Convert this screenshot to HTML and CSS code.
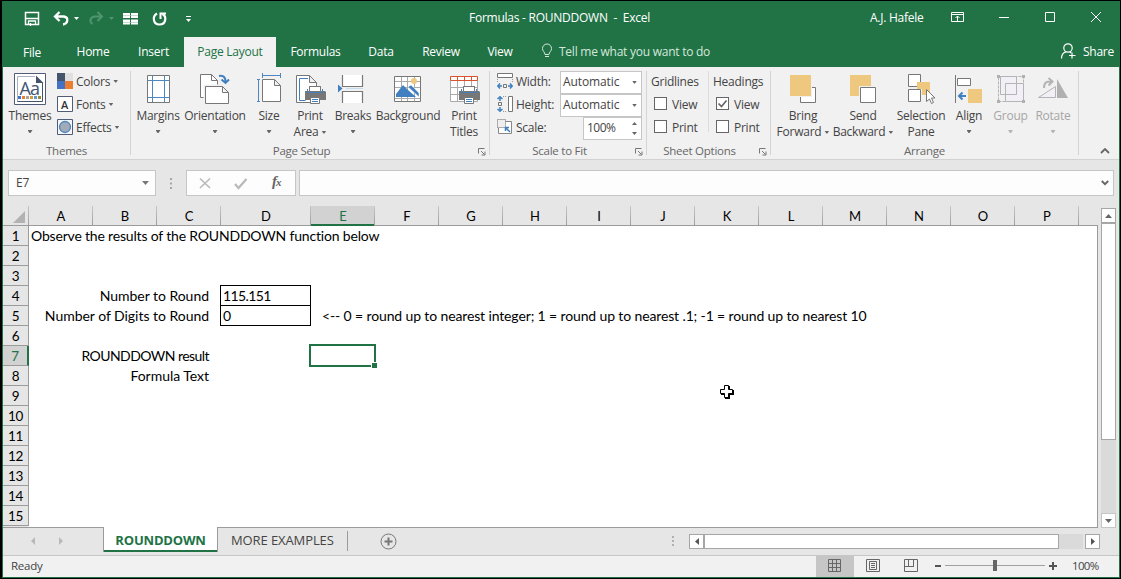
FILE: index.html
```
<!DOCTYPE html>
<html lang="en">
<head>
<meta charset="utf-8">
<title>Formulas - ROUNDDOWN - Excel</title>
<link rel="stylesheet" href="styles.css">
</head>
<body>
<div class="window"><div class="app">

<header class="titlebar">
  <svg class="qat" width="172" height="20" viewBox="23 9 172 20" fill="none" stroke="#fff">
    <path d="M25.5 12.500h13v12h-13z" stroke-width="1.500"/><path d="M26 18.500h12" stroke-width="1.500"/><path d="M28.500 25v-4h7v4M30.500 23v3" stroke-width="1.300"/>
    <path d="M59.500 12l-4.500 4.500 4.500 4.500M55.500 16.500h8.500c5 1 4 7.500-1 8" stroke-width="2.300"/>
    <path d="M74 17h5l-2.500 3z" fill="#fff" stroke="none"/>
    <g stroke="#4f9570"><path d="M97.500 12l4.500 4.500-4.500 4.500M101.500 16.500h-7c-5 1-5 5.500-2 7.500" stroke-width="2"/><path d="M109 17h5l-2.500 3z" fill="#4f9570" stroke="none"/></g>
    <path d="M123 13h7v5h-7zM131 13h7v5h-7zM123 19.500h7v5h-7zM131 19.500h7v5h-7z" fill="#fff" stroke="none"/><path d="M123 15.500h15M123 22.500h15" stroke="#9cc3ad" stroke-width=".6"/>
    <path d="M157 13.500c-5 3-4 11 2.500 11s7.500-8 3-10.500" stroke-width="2.200"/><path d="M160.500 19v-5.500h5.500" stroke-width="2"/>
    <path d="M186 16.500h5" /><path d="M186 19h5l-2.500 3z" fill="#fff" stroke="none"/>
  </svg>
  <div class="doc-title">Formulas - ROUNDDOWN&nbsp; -&nbsp; Excel</div>
  <div class="user">A.J. Hafele</div>
  <svg class="winctl" width="152" height="14" viewBox="950 10 152 14" fill="none" stroke="#fff">
    <path d="M951.500 12.500h12v9h-12zM951.500 14.500h12M957.500 21v-5M955.500 18l2-2 2 2M999 17.500h10M1045.500 12.500h9v9h-9zM1091 12l10 10M1101 12l-10 10"/>
  </svg>
</header>

<nav class="tabs">
  <div class="tab t-file">File</div><div class="tab t-home">Home</div><div class="tab t-insert">Insert</div><div class="tab t-layout active">Page Layout</div><div class="tab t-formulas">Formulas</div><div class="tab t-data">Data</div><div class="tab t-review">Review</div><div class="tab t-view">View</div>
  <div class="tell"><svg width="12" height="16" viewBox="541 43 12 16" fill="none" stroke="#d5e7dc"><path d="M545 54.500c0-2.500-2.500-3-2.500-6a4.500 4.500 0 0 1 9 0c0 3-2.500 3.500-2.500 6zM545 56.500h4"/></svg><span>Tell me what you want to do</span></div>
  <div class="share"><svg width="16" height="17" viewBox="1060 43 16 17" fill="none" stroke="#fff" stroke-width="1.200"><circle cx="1068" cy="48" r="4.200"/><path d="M1061.500 58.500c0-4 2-6 4.500-6.500M1070 52l1 1M1072 52.500v6M1069 55.500h6.500"/></svg><span>Share</span></div>
</nav>

<section class="ribbon">
  <div class="group g-themes">
    <div class="group-body">
      <div class="big b-themes"><svg width="34" height="34" viewBox="13 72 34 34" fill="none"><path d="M14.500 73.500h31v31h-31z" fill="#fff" stroke="#505c78"/><path d="M17.500 102V76.500H35" stroke="#a8b0c2"/><path d="M36 76h1l6 6v1h-7z" fill="#fff"/><path d="M36 75.500v7.500h7.500z" fill="#44546a"/><path d="M42.500 83v18.500h-25" stroke="#44546a"/><text class="aa" x="19.500" y="94.500" fill="#3f5675">Aa</text><path d="M18 96h3v3h-3z" fill="#4472c4"/><path d="M22 96h3v3h-3z" fill="#ed7d31"/><path d="M26 96h3v3h-3z" fill="#a5a5a5"/><path d="M30 96h3v3h-3z" fill="#d79b38"/><path d="M34 96h3v3h-3z" fill="#5b9bd5"/><path d="M38 96h3v3h-3z" fill="#9b8b3e"/></svg><span>Themes</span><i class="arr low"></i></div>
      <div class="small-col">
        <div class="small"><svg width="16" height="16"><path d="M0 0h8v8H0z" fill="#44546a"/><path d="M8 0h8v8H8z" fill="#e0e0e0"/><path d="M0 8h8v8H0z" fill="#4472c4"/><path d="M8 8h8v8H8z" fill="#ed7d31"/></svg><span>Colors</span><i class="arr"></i></div>
        <div class="small"><svg width="16" height="16"><path d="M.5.5h15v15H.5z" fill="#fff" stroke="#505c78"/><text class="a" x="4" y="12.500" fill="#333">A</text></svg><span>Fonts</span><i class="arr"></i></div>
        <div class="small"><svg width="16" height="16"><path d="M.5.5h15v15H.5z" fill="#f4f6fa" stroke="#505c78"/><circle cx="8" cy="8" r="5.500" fill="#a2aab8" stroke="#4e86bf" stroke-width="1.300"/></svg><span>Effects</span><i class="arr"></i></div>
      </div>
    </div>
    <div class="group-name">Themes</div>
  </div>

  <div class="group g-page">
    <div class="group-body">
      <div class="big b-margins"><svg width="34" height="34" viewBox="141 72 34 34" fill="none"><path d="M147.500 75.500h22v27h-22z" fill="#fff" stroke="#777"/><path d="M152.500 76v26M164.500 76v26M148 80.500h21M148 97.500h21" stroke="#4e86bf"/></svg><span>Margins</span><i class="arr low"></i></div>
      <div class="big b-orient"><svg width="34" height="34" viewBox="198 72 34 34" fill="#fff" stroke="#777"><path d="M200.500 74.500h11l6 6v17h-17z"/><path d="M211.500 74.500v6h6" fill="none"/><path d="M205.500 86.500h17l6 6v11h-23z" stroke="#f1f1f1" stroke-width="4"/><path d="M205.500 86.500h17l6 6v11h-23zM222.500 86.500v6h6"/><path d="M219 76c5-1 7 2 6.500 7M221.500 79.500l4 3.500 3.500-3.500" fill="none" stroke="#4080c0" stroke-width="2"/></svg><span>Orientation</span><i class="arr low"></i></div>
      <div class="big b-size"><svg width="34" height="34" viewBox="252 72 34 34" fill="none" stroke="#4e86bf"><path d="M262.500 75.500h18M262.500 73v5M280.500 73v5M258.500 79.500v22M257 79.500h3M257 101.500h3"/><path d="M262.500 79.500h12l6 6v16h-18zM274.500 79.500v6h6" fill="#fff" stroke="#777"/></svg><span>Size</span><i class="arr low"></i></div>
      <div class="big b-area"><svg width="34" height="34" viewBox="294 72 34 34" fill="#fff" stroke="#777"><path d="M297.500 75.500h13l7 7v20h-20zM310.500 75.500v7h7"/><path d="M309 78.500h-8.500v22h6" stroke="#4080c0" fill="none"/><path d="M306 91h4v-5h12v5h4l1 1v8h-21z" fill="#777" stroke="none"/><path d="M310.500 86.500h11v5h-11z"/><path d="M308.500 89v3.500h15V89" stroke="#4080c0" fill="none"/><path d="M311.500 97.500h9v6h-9z"/><path d="M313 99.500h6M313 101.500h6" stroke="#4080c0"/></svg><span>Print</span><span>Area<i class="arr"></i></span></div>
      <div class="big b-breaks"><svg width="34" height="34" viewBox="336 72 34 34" fill="none"><path d="M342.500 75v11.500h20V75M342.500 103V91.500h20V103" fill="#fff" stroke="#777" stroke-width="1.200"/><path d="M346 88.500h17" stroke="#c5dced"/><path d="M338 84.500v8l4.500-4z" fill="#4080c0"/></svg><span>Breaks</span><i class="arr low"></i></div>
      <div class="big b-back"><svg width="34" height="34" viewBox="391 72 34 34" fill="none"><path d="M394.500 76.500h26v25h-26z" fill="#fff" stroke="#777"/><path d="M401.500 77v24M407.500 77v24M414.500 77v24M395 81.500h25M395 87.500h25M395 98.500h25" stroke="#aaa"/><path d="M396 97v-3l7-9 5 5 8 7z" fill="#4080c0"/><path d="M408 87l11 10v-4l-8-8z" fill="#4080c0" stroke="#fff" stroke-width=".5"/><circle cx="414" cy="81" r="3" fill="#edc87e"/></svg><span>Background</span></div>
      <div class="big b-titles"><svg width="34" height="34" viewBox="447 72 34 34" fill="none"><path d="M450.500 80.500v21h27v-21z" fill="#fff" stroke="#aaa"/><path d="M457.500 80v21M464.500 80v21M471.500 80v21M451 87.500h26M451 94.500h26" stroke="#aaa"/><path d="M450.500 76.500h27v4h-27zM457.500 76.500v4M464.500 76.500v4M471.500 76.500v4" stroke="#d9532c" fill="#fff"/><g transform="translate(153)" fill="#fff" stroke="#777"><path d="M306 91h4v-5h12v5h4l1 1v8h-21z" fill="#777" stroke="none"/><path d="M310.500 86.500h11v5h-11z"/><path d="M308.500 89v3.500h15V89" stroke="#4080c0" fill="none"/><path d="M311.500 97.500h9v6h-9z"/><path d="M313 99.500h6M313 101.500h6" stroke="#4080c0"/></g></svg><span>Print</span><span>Titles</span></div>
    </div>
    <div class="group-name">Page Setup<svg class="launch" width="8" height="8"><path d="M.5 5.500v-5h6M3 3l3.500 3.500M7 3.500V7H3.500" fill="none" stroke="#777"/></svg></div>
  </div>

  <div class="group g-scale">
    <div class="group-body">
      <div class="scale-col">
        <div class="srow"><svg width="16" height="16" fill="none"><path d="M.5.500h15v4H.5z" fill="#fff" stroke="#777"/><path d="M.5 6v4M15.500 6v4" stroke="#999" stroke-dasharray="1 1"/><path d="M6.500 11.500h3v3h-3z" stroke="#777"/><path d="M1 13h4M11 13h4M3 10.500L.8 13 3 15.500M13 10.500l2.200 2.500-2.200 2.500" stroke="#4080c0" stroke-width="1.500"/></svg><span>Width:</span></div>
        <div class="srow"><svg width="16" height="16" fill="none"><path d="M11.500.500h4v15h-4z" fill="#fff" stroke="#777"/><path d="M6 .5h4M6 15.500h4" stroke="#999" stroke-dasharray="1 1"/><path d="M1.500 6.500h3v3h-3z" stroke="#777"/><path d="M3 1v4M3 11v4M.5 3L3 .8 5.500 3M.5 13L3 15.200 5.500 13" stroke="#4080c0" stroke-width="1.500"/></svg><span>Height:</span></div>
        <div class="srow"><svg width="16" height="16" fill="none"><path d="M8 2.500h6.500v12h-13V9" fill="#fff" stroke="#888"/><path d="M.5.500h8v8h-8z" stroke="#666" stroke-dasharray="1 1" fill="#eee"/><path d="M13 13L8.500 8.500M8.500 12V8.500H12" stroke="#4080c0" stroke-width="1.500"/></svg><span>Scale:</span></div>
      </div>
      <div class="combo-col"><div class="combo">Automatic<i class="arr"></i></div><div class="combo">Automatic<i class="arr"></i></div><div class="combo spin">100%<svg width="5" height="13" fill="#666"><path d="M0 3h5L2.500 0zM0 10h5L2.500 13z"/></svg></div></div>
    </div>
    <div class="group-name">Scale to Fit<svg class="launch" width="8" height="8"><path d="M.5 5.500v-5h6M3 3l3.500 3.500M7 3.500V7H3.500" fill="none" stroke="#777"/></svg></div>
  </div>

  <div class="group g-sheet">
    <div class="group-body">
      <div class="opt-col first"><div class="opt-head">Gridlines</div><div class="opt"><b class="box"></b><span>View</span></div><div class="opt"><b class="box"></b><span>Print</span></div></div>
      <div class="opt-col"><div class="opt-head">Headings</div><div class="opt"><b class="box"><svg width="11" height="11"><path d="M1.500 5.500L4.500 8.500 9.500 2.500" fill="none" stroke="#666" stroke-width="1.700"/></svg></b><span>View</span></div><div class="opt"><b class="box"></b><span>Print</span></div></div>
    </div>
    <div class="group-name">Sheet Options<svg class="launch" width="8" height="8"><path d="M.5 5.500v-5h6M3 3l3.500 3.500M7 3.500V7H3.500" fill="none" stroke="#777"/></svg></div>
  </div>

  <div class="group g-arrange">
    <div class="group-body">
      <div class="big b-bring"><svg width="34" height="34" viewBox="786 72 34 34"><path d="M800.500 87.500h15v15h-15z" fill="#fff" stroke="#777"/><path d="M789 74h23v23h-23z" fill="#f1f1f1"/><path d="M790 75h21v21h-21z" fill="#edc87e"/></svg><span>Bring</span><span>Forward<i class="arr"></i></span></div>
      <div class="big b-send"><svg width="34" height="34" viewBox="846 72 34 34"><path d="M850 75h21v21h-21z" fill="#edc87e"/><path d="M859 86h18v18h-18z" fill="#f1f1f1"/><path d="M860.500 87.500h15v15h-15z" fill="#fff" stroke="#777"/></svg><span>Send</span><span>Backward<i class="arr"></i></span></div>
      <div class="big b-sel"><svg width="34" height="34" viewBox="904 72 34 34" fill="#fff" stroke="#777"><path d="M908.500 74.500h12v12h-12zM908.500 89.500h12v12h-12z"/><path d="M917 82h13v13h-8v-6h-5z" fill="#edc87e" stroke="none"/><path d="M926.500 89.500v12l3-2.500 2 4.500 2-1-2-4.500h3.500z"/></svg><span>Selection</span><span>Pane</span></div>
      <div class="big b-align"><svg width="34" height="34" viewBox="952 72 34 34" fill="none"><path d="M955.500 75v28" stroke="#777"/><path d="M957.500 78.500h13v7h-13z" fill="#fff" stroke="#777"/><path d="M968 89h14v14h-14z" fill="#edc87e"/><path d="M966 96h-7M962.500 92.500L959 96l3.500 3.500" stroke="#4080c0" stroke-width="2"/></svg><span>Align</span><i class="arr low"></i></div>
      <div class="big b-group off"><svg width="34" height="34" viewBox="994 72 34 34" fill="#f3eff6" stroke="#b4b4b4"><path d="M998.500 76.500h25v25h-25z" fill="none" stroke-dasharray="3 1"/><path d="M1000.500 76.500h16v18h-16zM1005.500 83.500h18v18h-18z"/><path d="M1005.500 94.500h11v-11" fill="none"/><path d="M997 75h3v3h-3zM1022 75h3v3h-3zM997 100h3v3h-3zM1022 100h3v3h-3z" fill="#b0b0b0" stroke="none"/></svg><span>Group</span><i class="arr low"></i></div>
      <div class="big b-rotate off"><svg width="34" height="34" viewBox="1036 72 34 34" fill="none" stroke="#b4b4b4"><path d="M1038.500 97.500h17v-11z" fill="#f3eff6"/><path d="M1057 79v19h11z" fill="#b0b0b0" stroke="none"/><path d="M1044 88c0-6 3-7 8-6.500M1048.500 78l4 3.500-4 4" stroke-width="2"/></svg><span>Rotate</span><i class="arr low"></i></div>
    </div>
    <div class="group-name">Arrange</div>
  </div>
  <svg class="collapse" width="10" height="6"><path d="M1 5l4-4 4 4" fill="none" stroke="#666" stroke-width="1.800"/></svg>
</section>

<section class="formula">
  <div class="namebox">E7<svg width="7" height="4"><path d="M0 0h7L3.500 4z" fill="#777"/></svg></div>
  <svg class="dots" width="2" height="11"><path d="M0 0h2v2H0zM0 4.500h2v2H0zM0 9h2v2H0z" fill="#a5a5a5"/></svg>
  <div class="fbuttons"><svg width="84" height="24" viewBox="187 171 84 24" fill="none" stroke="#b9b9b9" stroke-width="1.600"><path d="M200 178.500l10 9.500M210 178.500l-10 9.500"/><path d="M235 184l3.500 4 8-9" stroke-width="2.200"/></svg><span class="fx">f<em>x</em></span></div>
  <div class="finput"><svg width="8" height="6"><path d="M.8 1L4 4.200 7.200 1" fill="none" stroke="#666" stroke-width="1.900"/></svg></div>
</section>

<main class="sheet">
  <div class="grid">
    <div class="colheads"><div class="corner"><svg width="12" height="12"><path d="M12 0v12H0z" fill="#b2b2b2"/></svg></div><div>A</div><div>B</div><div>C</div><div class="wide">D</div><div class="on">E</div><div>F</div><div>G</div><div>H</div><div>I</div><div>J</div><div>K</div><div>L</div><div>M</div><div>N</div><div>O</div><div>P</div></div>
    <div class="rows">
      <div class="row"><div class="rh">1</div><div class="cell first-text">Observe the results of the ROUNDDOWN function below</div></div>
      <div class="row"><div class="rh">2</div></div>
      <div class="row"><div class="rh">3</div></div>
      <div class="row"><div class="rh">4</div><div class="cell label">Number to Round</div><div class="cell boxed">115.151</div></div>
      <div class="row"><div class="rh">5</div><div class="cell label">Number of Digits to Round</div><div class="cell boxed">0</div><div class="cell note">&lt;-- 0 = round up to nearest integer; 1 = round up to nearest .1; -1 = round up to nearest 10</div></div>
      <div class="row"><div class="rh">6</div></div>
      <div class="row"><div class="rh on">7</div><div class="cell label result">ROUNDDOWN result</div><div class="cell wide"></div><div class="cell current"><div class="selection"><i></i></div></div></div>
      <div class="row"><div class="rh">8</div><div class="cell label">Formula Text</div></div>
      <div class="row"><div class="rh">9</div></div>
      <div class="row"><div class="rh">10</div></div>
      <div class="row"><div class="rh">11</div></div>
      <div class="row"><div class="rh">12</div></div>
      <div class="row"><div class="rh">13</div></div>
      <div class="row"><div class="rh">14</div></div>
      <div class="row"><div class="rh">15</div></div>
      <svg class="pointer" width="16" height="15"><path d="M6 2h5v4h4v5h-4v4H6v-4H2V6h4z"/><path d="M5.500 1.500h4v4h4v4h-4v4h-4v-4h-4v-4h4z" fill="#fff" stroke="#000"/></svg>
    </div>
  </div>
  <div class="vscroll"><div class="sbtn"><svg width="7" height="4"><path d="M0 4h7L3.500 0z" fill="#666"/></svg></div><div class="vthumb"></div><div class="vtrack"></div><div class="sbtn light"><svg width="7" height="4"><path d="M0 0h7L3.500 4z" fill="#666"/></svg></div></div>
</main>

<section class="sheetbar">
  <div class="nav"><svg width="34" height="8" fill="#b9b9b9"><path d="M5 0v8L1 4zM29 0v8l4-4z"/></svg></div>
  <div class="stab current-tab">ROUNDDOWN</div>
  <div class="tabrest">
    <div class="stab other">MORE EXAMPLES</div>
    <svg class="add" width="17" height="17" fill="none" stroke="#777"><circle cx="8.500" cy="8.500" r="7.500"/><path d="M4.500 8.500h8M8.500 4.500v8" stroke-width="2"/></svg>
    <svg class="dots2" width="2" height="10"><path d="M0 0h2v2H0zM0 4h2v2H0zM0 8h2v2H0z" fill="#b0b0b0"/></svg>
    <div class="sbtn"><svg width="4" height="7"><path d="M4 0v7L0 3.500z" fill="#555"/></svg></div><div class="hthumb"></div><div class="htrack"></div><div class="sbtn"><svg width="4" height="7"><path d="M0 0v7l4-3.500z" fill="#555"/></svg></div>
  </div>
</section>

<footer class="status">
  <span class="ready">Ready</span>
  <div class="views">
    <div class="v on"><svg width="13" height="13" fill="none" stroke="#666"><path d="M.5.5h12v12H.5zM4.500 0v13M8.500 0v13M0 4.500h13M0 8.500h13"/></svg></div>
    <div class="v"><svg width="14" height="13" fill="none" stroke="#666"><path d="M.5.500h13v12H.5zM3.500 2.500h7v8h-7zM5 4.500h4M5 6.500h4M5 8.500h4"/></svg></div>
    <div class="v"><svg width="14" height="13" fill="none" stroke="#666"><path d="M.5.500h13v12H.5zM4.500 0v7.500M9.500 0v7.500M0 7.500h10"/></svg></div>
  </div>
  <svg class="zoom" width="122" height="12" viewBox="935 560 122 12"><path d="M935 565h6v2h-6zM1049 565h8v2h-8zM1052 562h2v8h-2z" fill="#555"/><path d="M945 565h100v1h-100z" fill="#a0a0a0"/><path d="M993 560h4v11h-4z" fill="#666"/></svg>
  <span class="pct">100%</span>
</footer>
</div></div>
</body>
</html>
```
FILE: styles.css
```
* { box-sizing: border-box; }
body { margin: 0; font: 12px/16px "Open Sans", "Noto Sans", sans-serif; color: #444; letter-spacing: -0.25px; overflow: hidden; }
svg { display: block; flex: none; }
.window { width: 1121px; height: 579px; background: #000; padding: 1px 1px 1px 2px; }
.app { height: 577px; border: solid #217346; border-width: 0 1px 1px; display: flex; flex-direction: column; background: #e6e6e6; }
.app > * { flex: none; }
.arr { display: inline-block; width: 5px; height: 3px; background: #666; clip-path: polygon(0 0, 100% 0, 60% 100%, 40% 100%); flex: none; }

/* title bar and tabs */
.titlebar { height: 36px; background: #217346; color: #fff; display: flex; padding-left: 20px; white-space: nowrap; }
.qat { margin-top: 8px; }
.doc-title { margin: 9px 0 0 274px; width: 401px; }
.user { margin-top: 9px; width: 80px; }
.winctl { margin-top: 9px; }
.tabs { height: 30px; background: #217346; color: #fff; display: flex; line-height: 29px; white-space: nowrap; }
.tab { text-align: center; }
.t-file { width: 58px; padding-top: 1px; }
.t-home { width: 64px; }
.t-insert { width: 57px; margin-right: 2px; }
.t-layout { width: 92px; }
.t-formulas { width: 79px; }
.t-data { width: 52px; }
.t-review { width: 68px; }
.t-view { width: 50px; }
.tab.active { background: #f1f1f1; color: #217346; }
.tell { display: flex; gap: 6px; margin-left: 16px; width: 519px; color: #d5e7dc; }
.tell svg, .share svg { margin-top: 6px; }
.share { display: flex; gap: 7px; }

/* ribbon */
.ribbon { height: 93px; background: #f1f1f1; border-bottom: 1px solid #d2d2d2; display: flex; padding-top: 4px; }
.group { height: 84px; border-right: 1px solid #d4d4d4; }
.group-body { height: 72px; display: flex; }
.group-name { position: relative; text-align: center; color: #666; line-height: 16px; height: 16px; font-size: 11.5px; }
.launch { position: absolute; right: 3px; bottom: 3px; }
.g-themes { width: 128px; }
.g-page { width: 359px; }
.g-page .group-name { padding-right: 17px; }
.g-scale { width: 157px; }
.g-scale .group-name { padding-right: 17px; }
.g-sheet { width: 124px; }
.g-sheet .group-name { padding-right: 18px; }
.g-arrange { width: 308px; }
.big { display: flex; flex-direction: column; align-items: center; flex: none; white-space: nowrap; padding-top: 1px; }
.big span { height: 16px; display: flex; align-items: center; gap: 3px; }
.big svg + span { margin-top: 2px; }
.low { margin-top: 6px; }
.off { color: #a6a6a6; }
.off .arr { background: #b4b4b4; }
.b-themes { width: 54px; }
.b-margins { width: 54px; }
.b-orient { width: 60px; }
.b-size { width: 48px; }
.b-area { width: 34px; }
.b-breaks { width: 52px; }
.b-back { width: 58px; }
.b-titles { width: 54px; margin-right: -3px; }
.b-bring { width: 64px; }
.b-send { width: 56px; }
.b-sel { width: 60px; }
.b-align { width: 36px; }
.b-group { width: 47px; }
.b-rotate { width: 38px; }
.aa { font: 18px "Open Sans", sans-serif; letter-spacing: -1px; }
.a { font: 600 11px "Open Sans", sans-serif; letter-spacing: 0; }
.small-col { display: flex; flex-direction: column; gap: 7px; padding-top: 2px; }
.small { display: flex; align-items: center; gap: 3px; height: 16px; }
.small span, .srow span, .opt span { padding-top: 1px; }
.scale-col { width: 70px; padding: 2px 0 0 7px; display: flex; flex-direction: column; gap: 7px; }
.srow { display: flex; gap: 3px; height: 16px; }
.combo-col { width: 82px; display: flex; flex-direction: column; align-items: flex-end; }
.combo { width: 82px; height: 23px; border: 1px solid #c6c6c6; background: #fff; display: flex; align-items: center; justify-content: space-between; padding: 0 4px 1px 2px; letter-spacing: -.1px; }
.spin { width: 59px; padding-left: 3px; letter-spacing: -.5px; }
.opt-col { display: flex; flex-direction: column; gap: 7px; padding: 2px 0 0 4px; }
.opt-col.first { width: 62px; border-right: 1px solid #dcdcdc; height: 61px; }
.opt { display: flex; gap: 5px; height: 16px; padding-left: 3px; }
.opt-head { height: 16px; padding-top: 1px; }
.box { width: 13px; height: 13px; border: 1px solid #666; background: #fff; margin-top: 1px; }
.collapse { margin: 77px 0 0 21px; }

/* formula bar */
.formula { height: 46px; padding: 10px 5px 0; display: flex; }
.formula > div { height: 26px; border: 1px solid #c6c6c6; background: #fdfdfd; }
.namebox { width: 148px; display: flex; align-items: center; justify-content: space-between; padding: 0 6px 0 7px; }
.dots { margin: 8px 14px 0; }
.formula > .fbuttons { width: 110px; margin-right: 3px; display: flex; }
.fx { font: italic bold 15px/21px "Liberation Serif", serif; letter-spacing: -1px; color: #666; padding-left: 1px; }
.fx em { font-size: 11px; }
.finput { flex: 1; display: flex; align-items: center; justify-content: flex-end; padding-right: 4px; }

/* worksheet */
.sheet { height: 322px; display: flex; font-family: Lato, sans-serif; color: #000; }
.grid { width: 1095px; display: flex; flex-direction: column; }
.colheads { height: 20px; border-bottom: 1px solid #9b9b9b; display: flex; line-height: 20px; font-size: 13px; text-align: center; letter-spacing: 0; }
.colheads > div { width: 64px; padding-left: 1px; border-right: 1px solid; border-image: linear-gradient(#c9c9c9, #9b9b9b) 1; }
.colheads > .corner { width: 26px; padding: 5px 0 0 10px; }
.colheads > .wide { width: 90px; }
.colheads > .on { background: #d2d2d2; color: #217346; height: 20px; box-shadow: inset 0 -2px #217346; }
.rows { position: relative; height: 301px; background: linear-gradient(#e6e6e6, #e6e6e6) 0 0 / 25px 100% no-repeat #fff; border-right: 1px solid #9b9b9b; }
.row { height: 20px; display: flex; font-size: 14px; line-height: 20px; letter-spacing: -.18px; white-space: nowrap; }
.rh { width: 26px; background: #e6e6e6; border: solid; border-width: 0 1px 1px 0; border-color: #9b9b9b; text-align: center; font-size: 13.5px; line-height: 21px; letter-spacing: -.4px; }
.rh.on { background: #d2d2d2; color: #217346; border-right: 2px solid #217346; }
.first-text { padding-left: 2px; }
.label { width: 192px; text-align: right; padding-right: 12px; letter-spacing: -.03px; }
.result { letter-spacing: -.55px; }
.boxed { width: 91px; height: 21px; margin: -1px 0 0 -1px; border: 1px solid #000; padding-left: 2px; letter-spacing: -.6px; }
.note { padding-left: 11px; letter-spacing: -.13px; }
.cell.wide { width: 90px; }
.current { position: relative; width: 64px; }
.selection { position: absolute; left: -2px; top: -2px; width: 67px; height: 23px; border: 2px solid #217346; }
.selection i { position: absolute; right: -4px; bottom: -4px; width: 7px; height: 7px; background: #217346; border: 1px solid #fff; }
.pointer { position: absolute; left: 716px; top: 158px; }
.vscroll { margin: 2px 0 0 3px; width: 15px; display: flex; flex-direction: column; }
.sbtn { width: 15px; height: 15px; flex: none; border: 1px solid #a6a6a6; background: #fff; display: flex; align-items: center; justify-content: center; }
.sbtn.light { border-color: #c6c6c6; }
.vthumb { height: 217px; border: 1px solid #a6a6a6; background: #fff; }
.vtrack { height: 73px; background: #dadada; }

/* sheet tabs */
.sheetbar { height: 28px; display: flex; margin-top: -1px; }
.nav { width: 100px; border-top: 1px solid #9b9b9b; padding: 9px 0 0 27px; }
.current-tab { width: 115px; height: 25px; background: #fff; border: solid #9b9b9b; border-width: 0 1px; box-shadow: inset 0 -2px #217346; color: #217346; font-weight: 700; text-align: center; line-height: 26px; }
.tabrest { width: 880px; border-top: 1px solid #9b9b9b; display: flex; }
.tabrest > * { flex: none; }
.other { width: 130px; height: 20px; margin-top: 3px; padding-left: 13px; border-right: 1px solid #9b9b9b; line-height: 19px; }
.add { margin: 5px 0 0 32px; }
.dots2 { margin: 8px 15px 0 275px; }
.tabrest .sbtn { margin-top: 6px; }
.hthumb { width: 355px; height: 15px; margin-top: 6px; border: 1px solid #a6a6a6; background: #fff; }
.htrack { width: 24px; height: 15px; margin: 6px 2px 0 0; background: #dadada; }
.stab { flex: none; font-size: 13px; letter-spacing: -.1px; white-space: nowrap; }
.current-tab { letter-spacing: -.2px; }

/* status bar */
.status { height: 22px; background: #f1f1f1; border-top: 1px solid #c6c6c6; display: flex; line-height: 19px; font-size: 11.5px; }
.ready { width: 813px; padding-left: 8px; }
.views { display: flex; }
.v { width: 38px; padding: 3px 0 0 12px; }
.v.on { background: #c6c6c6; }
.zoom { margin: 4px 15px 0 5px; }
.pct { letter-spacing: -.7px; line-height: 20px; }
```
